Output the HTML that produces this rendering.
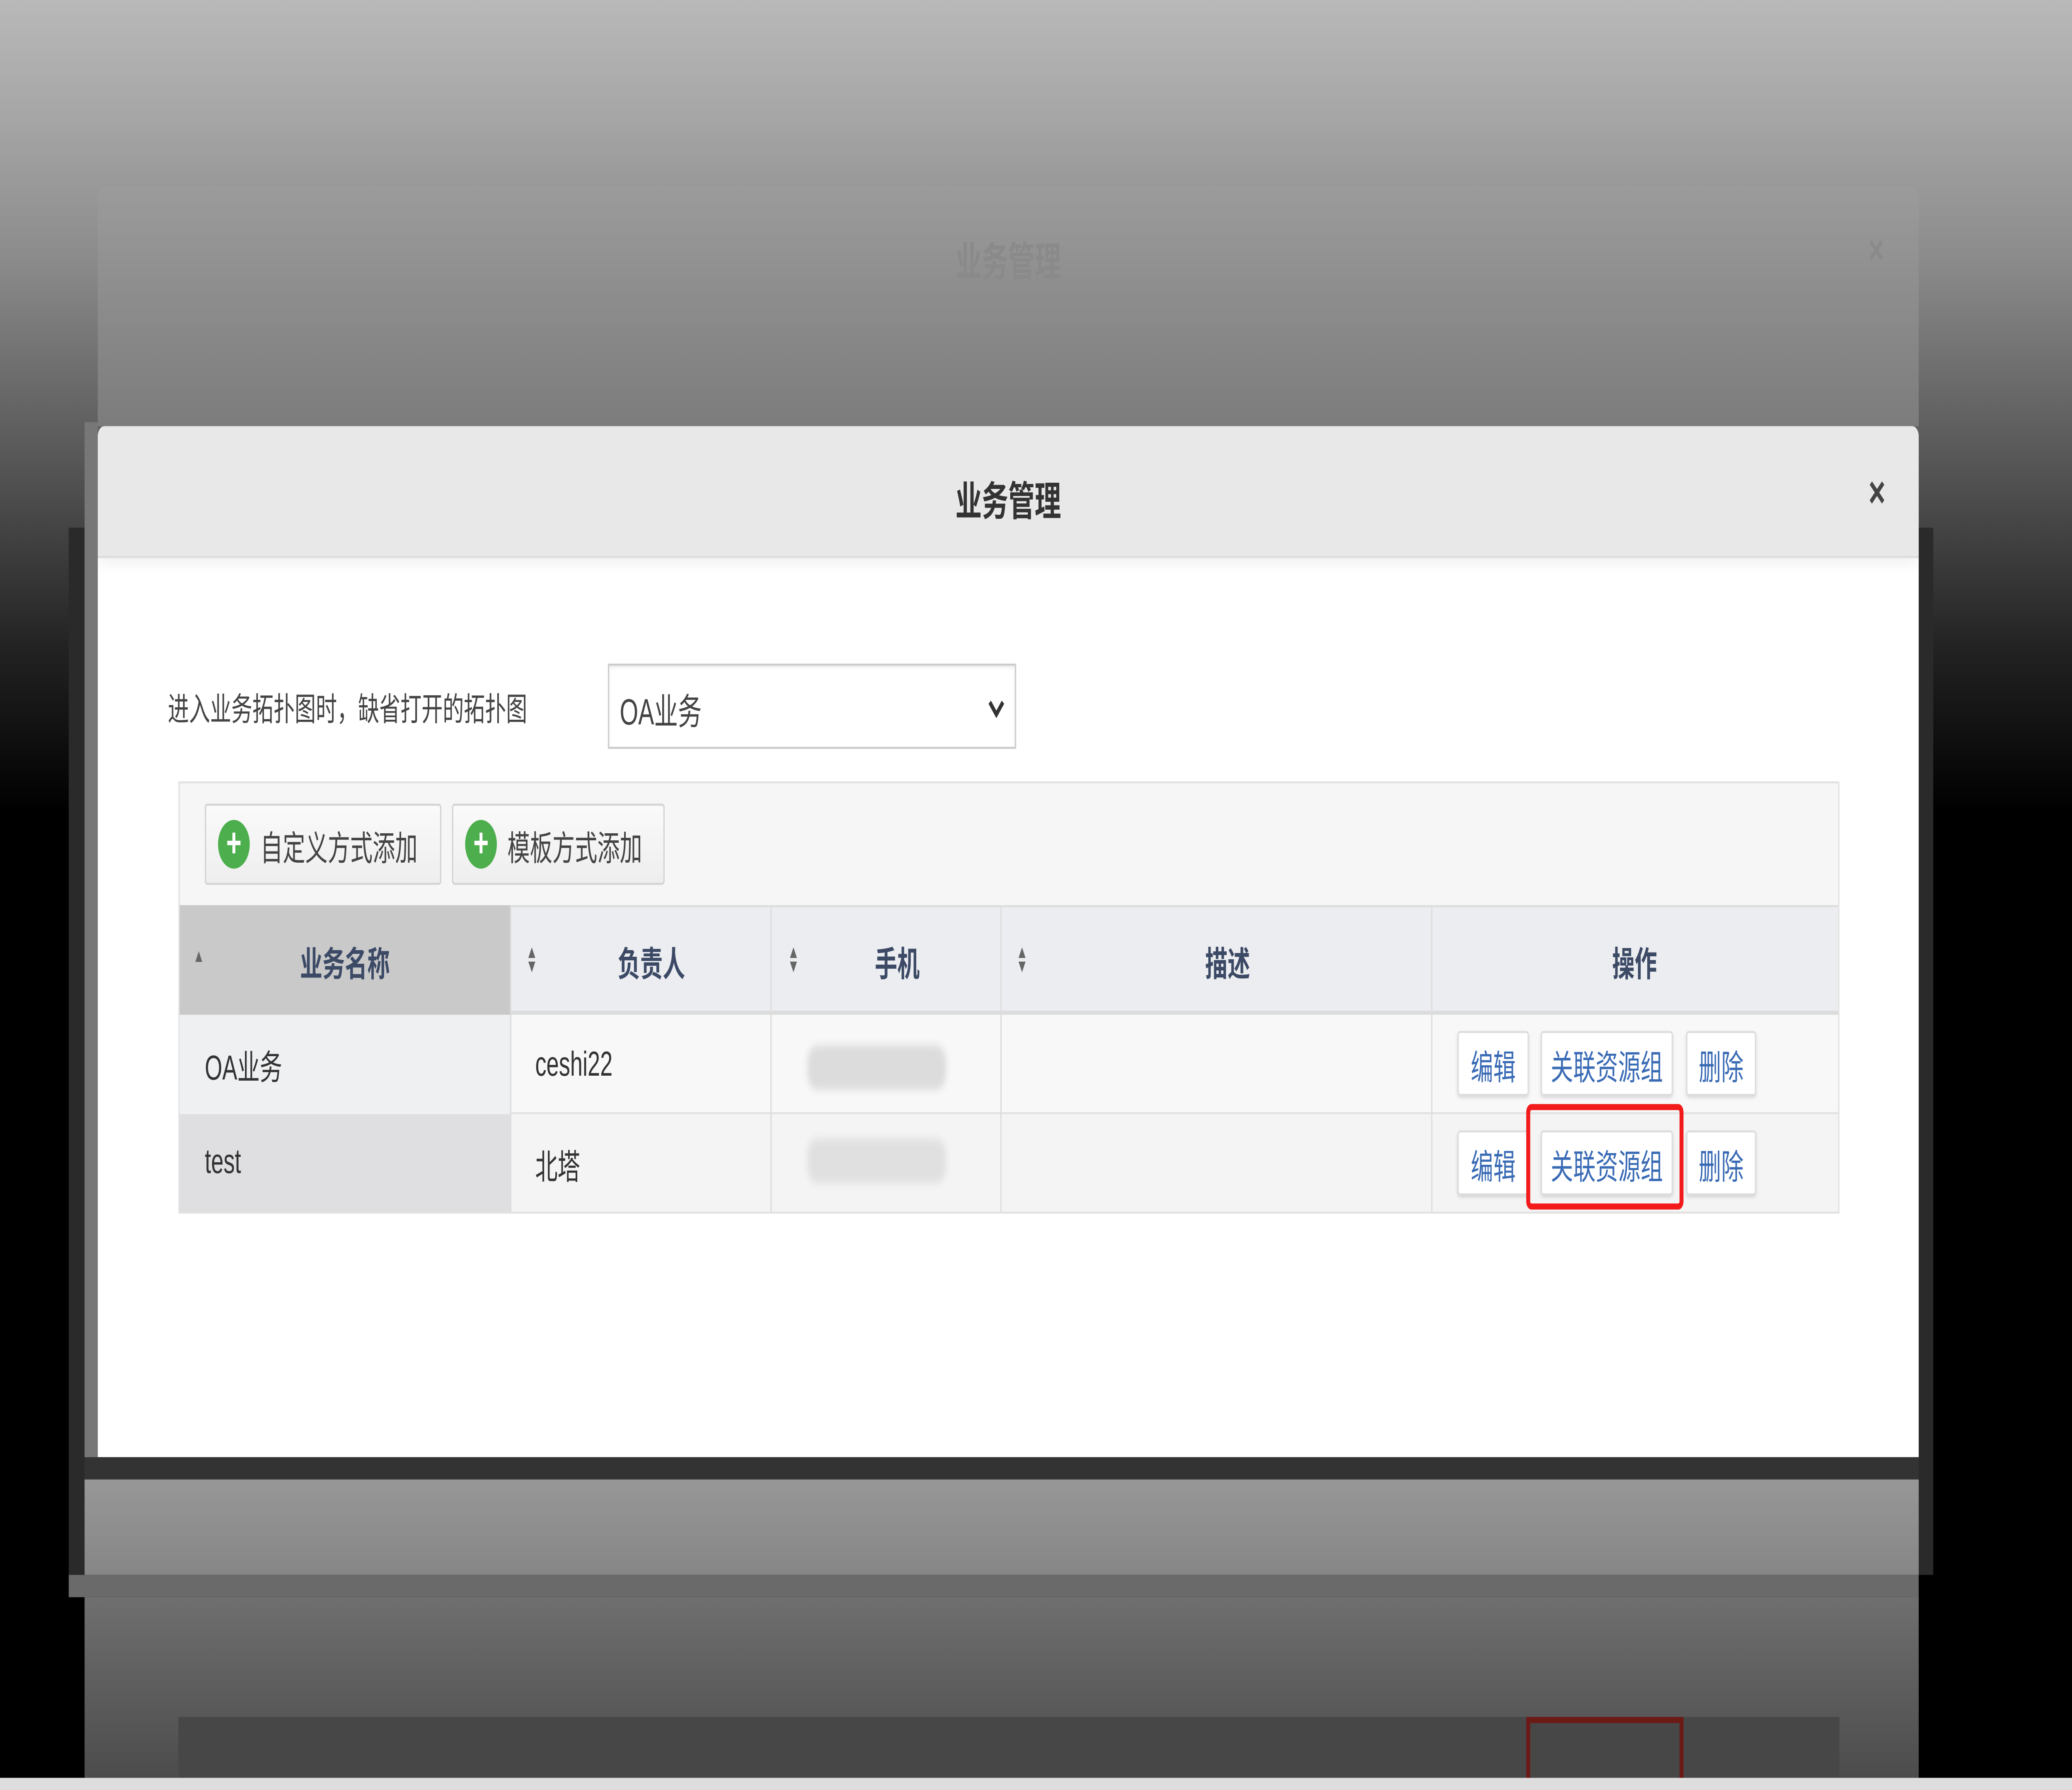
<!DOCTYPE html>
<html><head><meta charset="utf-8"><style>
*{margin:0;padding:0;box-sizing:border-box}
html,body{width:100%;height:100%;overflow:hidden;background:#000}
svg.root{display:block;width:100vw;height:100vh}
#s{position:relative;width:1568px;height:882px;
background:linear-gradient(#b9b9b9 0,#a5a5a5 60px,#8a8a8a 130px,#555 230px,#222 320px,#000 400px,#000 882px);
font-family:"Liberation Sans","Noto Sans CJK SC",sans-serif;color:#333;overflow:hidden}
.a{position:absolute}
.cell{position:absolute;display:flex;align-items:center;font-size:17px}
.btn{position:absolute;background:#fff;border:1px solid #ddd;border-radius:2px;box-shadow:0 1px 2px rgba(0,0,0,.12);color:#3a6bb5;font-size:17px;display:flex;align-items:center;justify-content:center}
.tb{position:absolute;background:linear-gradient(#fafafa,#eee);border:1px solid #d4d4d4;border-radius:2px;font-size:17px;color:#444;display:flex;align-items:center}
.plus{width:24px;height:24px;border-radius:50%;background:#4cae4c;color:#fff;font-weight:bold;font-size:20px;line-height:24px;text-align:center;margin:0 8px 0 9px}
.sort{position:absolute;font-size:9px;color:#666;line-height:7px}
</style></head><body>
<svg class="root" viewBox="0 0 1568 882" preserveAspectRatio="none" xmlns="http://www.w3.org/2000/svg">
<foreignObject x="0" y="0" width="1568" height="882">
<div xmlns="http://www.w3.org/1999/xhtml" id="s">
<div class="a" style="left:52px;top:260px;width:1411px;height:516px;background:#2a2a2a"></div>
<div class="a" style="left:64px;top:208px;width:10px;height:512px;background:#777"></div>
<div class="a" style="left:74px;top:92px;width:1378px;height:118px;border-radius:5px 5px 0 0;background:linear-gradient(#9b9b9b,#7c7c7c)"></div>
<div class="a" style="left:74px;top:113px;width:1378px;text-align:center;font-size:20px;font-weight:bold;color:#8a8a8a">业务管理</div>
<div class="a" style="left:1414px;top:113px;font-size:20px;font-weight:bold;color:#8a8a8a">×</div>
<div class="a" style="left:74px;top:210px;width:1378px;height:508px;background:#fff;border-radius:5px 5px 0 0;overflow:hidden">
 <div class="a" style="left:0;top:0;width:1378px;height:65px;background:#e8e8e8;border-bottom:1px solid #ddd;box-shadow:0 3px 8px rgba(0,0,0,.06)"></div>
 <div class="a" style="left:0;top:21px;width:1378px;text-align:center;font-size:20px;font-weight:bold;color:#333">业务管理</div>
 <div class="a" style="left:1340px;top:20px;font-size:22px;font-weight:bold;color:#444">×</div>
 <div class="a" style="left:53px;top:126px;font-size:16px;color:#444">进入业务拓扑图时，缺省打开的拓扑图</div>
 <div class="a" style="left:386px;top:117px;width:309px;height:42px;border:1px solid #ccc;box-shadow:inset 0 1px 2px rgba(0,0,0,.08)">
  <div class="a" style="left:8px;top:9px;font-size:18px;color:#444">OA业务</div>
  <svg class="a" style="left:286px;top:16px" width="14" height="10" viewBox="0 0 14 10"><path d="M2 2 L7 8 L12 2" stroke="#333" stroke-width="2.4" fill="none"/></svg>
 </div>
 <div class="a" style="left:61px;top:175px;width:1257px;height:213px;border:1px solid #e2e2e2;background:#f6f6f6">
  <div class="tb" style="left:19px;top:10px;width:179px;height:40px"><span class="plus">+</span>自定义方式添加</div>
  <div class="tb" style="left:206px;top:10px;width:161px;height:40px"><span class="plus">+</span>模板方式添加</div>
  <div class="a" style="left:0;top:60px;width:1255px;height:54px;background:#ecedf0;border-top:1px solid #ddd;border-bottom:2px solid #dcdcdc"></div>
  <div class="a" style="left:0;top:60px;width:250px;height:54px;background:#c9c9c9"></div>
  <div class="a" style="left:0;top:114px;width:1255px;height:49px;background:#f8f8f9;border-bottom:1px solid #e2e2e2"></div>
  <div class="a" style="left:0;top:114px;width:250px;height:49px;background:#eff0f2"></div>
  <div class="a" style="left:0;top:163px;width:1255px;height:48px;background:#f4f4f5"></div>
  <div class="a" style="left:0;top:163px;width:250px;height:48px;background:#dfdfe1"></div>
  <div class="a" style="left:250px;top:60px;width:1px;height:151px;background:#ddd"></div>
  <div class="a" style="left:447px;top:60px;width:1px;height:151px;background:#ddd"></div>
  <div class="a" style="left:621px;top:60px;width:1px;height:151px;background:#ddd"></div>
  <div class="a" style="left:947px;top:60px;width:1px;height:151px;background:#ddd"></div>
  <div class="cell" style="left:0;top:60px;width:250px;height:54px;justify-content:center;font-weight:bold;color:#3c4a66">业务名称</div>
  <div class="cell" style="left:250px;top:60px;width:214px;height:54px;justify-content:center;font-weight:bold;color:#3c4a66">负责人</div>
  <div class="cell" style="left:447px;top:60px;width:192px;height:54px;justify-content:center;font-weight:bold;color:#3c4a66">手机</div>
  <div class="cell" style="left:621px;top:60px;width:344px;height:54px;justify-content:center;font-weight:bold;color:#3c4a66">描述</div>
  <div class="cell" style="left:947px;top:60px;width:308px;height:54px;justify-content:center;font-weight:bold;color:#3c4a66">操作</div>
  <div class="sort" style="left:10px;top:82px">▲</div>
  <div class="sort" style="left:262px;top:80px">▲<br/>▼</div>
  <div class="sort" style="left:460px;top:80px">▲<br/>▼</div>
  <div class="sort" style="left:633px;top:80px">▲<br/>▼</div>
  <div class="cell" style="left:19px;top:114px;height:49px">OA业务</div>
  <div class="cell" style="left:269px;top:114px;height:49px">ceshi22</div>
  <div class="a" style="left:475px;top:129px;width:105px;height:22px;background:#dcdcdc;border-radius:8px;filter:blur(2px)"></div>
  <div class="cell" style="left:19px;top:163px;height:48px">test</div>
  <div class="cell" style="left:269px;top:163px;height:48px">北塔</div>
  <div class="a" style="left:475px;top:175px;width:105px;height:22px;background:#e0e0e0;border-radius:8px;filter:blur(2px)"></div>
  <div class="btn" style="left:967px;top:122px;width:54px;height:32px">编辑</div>
  <div class="btn" style="left:1030px;top:122px;width:100px;height:32px">关联资源组</div>
  <div class="btn" style="left:1140px;top:122px;width:53px;height:32px">删除</div>
  <div class="btn" style="left:967px;top:171px;width:54px;height:32px">编辑</div>
  <div class="btn" style="left:1030px;top:171px;width:100px;height:32px">关联资源组</div>
  <div class="btn" style="left:1140px;top:171px;width:53px;height:32px">删除</div>
  <div class="a" style="left:1019px;top:158px;width:119px;height:52px;border:3px solid #f21a1a;border-radius:4px"></div>
 </div>
</div>
<div class="a" style="left:64px;top:718px;width:1388px;height:11px;background:#333"></div>
<div class="a" style="left:64px;top:729px;width:1388px;height:47px;background:linear-gradient(#979797,#868686)"></div>
<div class="a" style="left:52px;top:776px;width:1400px;height:11px;background:#6a6a6a"></div>
<div class="a" style="left:64px;top:787px;width:1388px;height:89px;background:linear-gradient(#6f6f6f,#4c4c4c)"></div>
<div class="a" style="left:135px;top:846px;width:1257px;height:30px;background:#474747"></div>
<div class="a" style="left:1155px;top:846px;width:119px;height:30px;border:3px solid #6b1a16;border-bottom:none"></div>
<div class="a" style="left:0;top:876px;width:1568px;height:6px;background:#ddd"></div>
</div>
</foreignObject>
</svg>
</body></html>
